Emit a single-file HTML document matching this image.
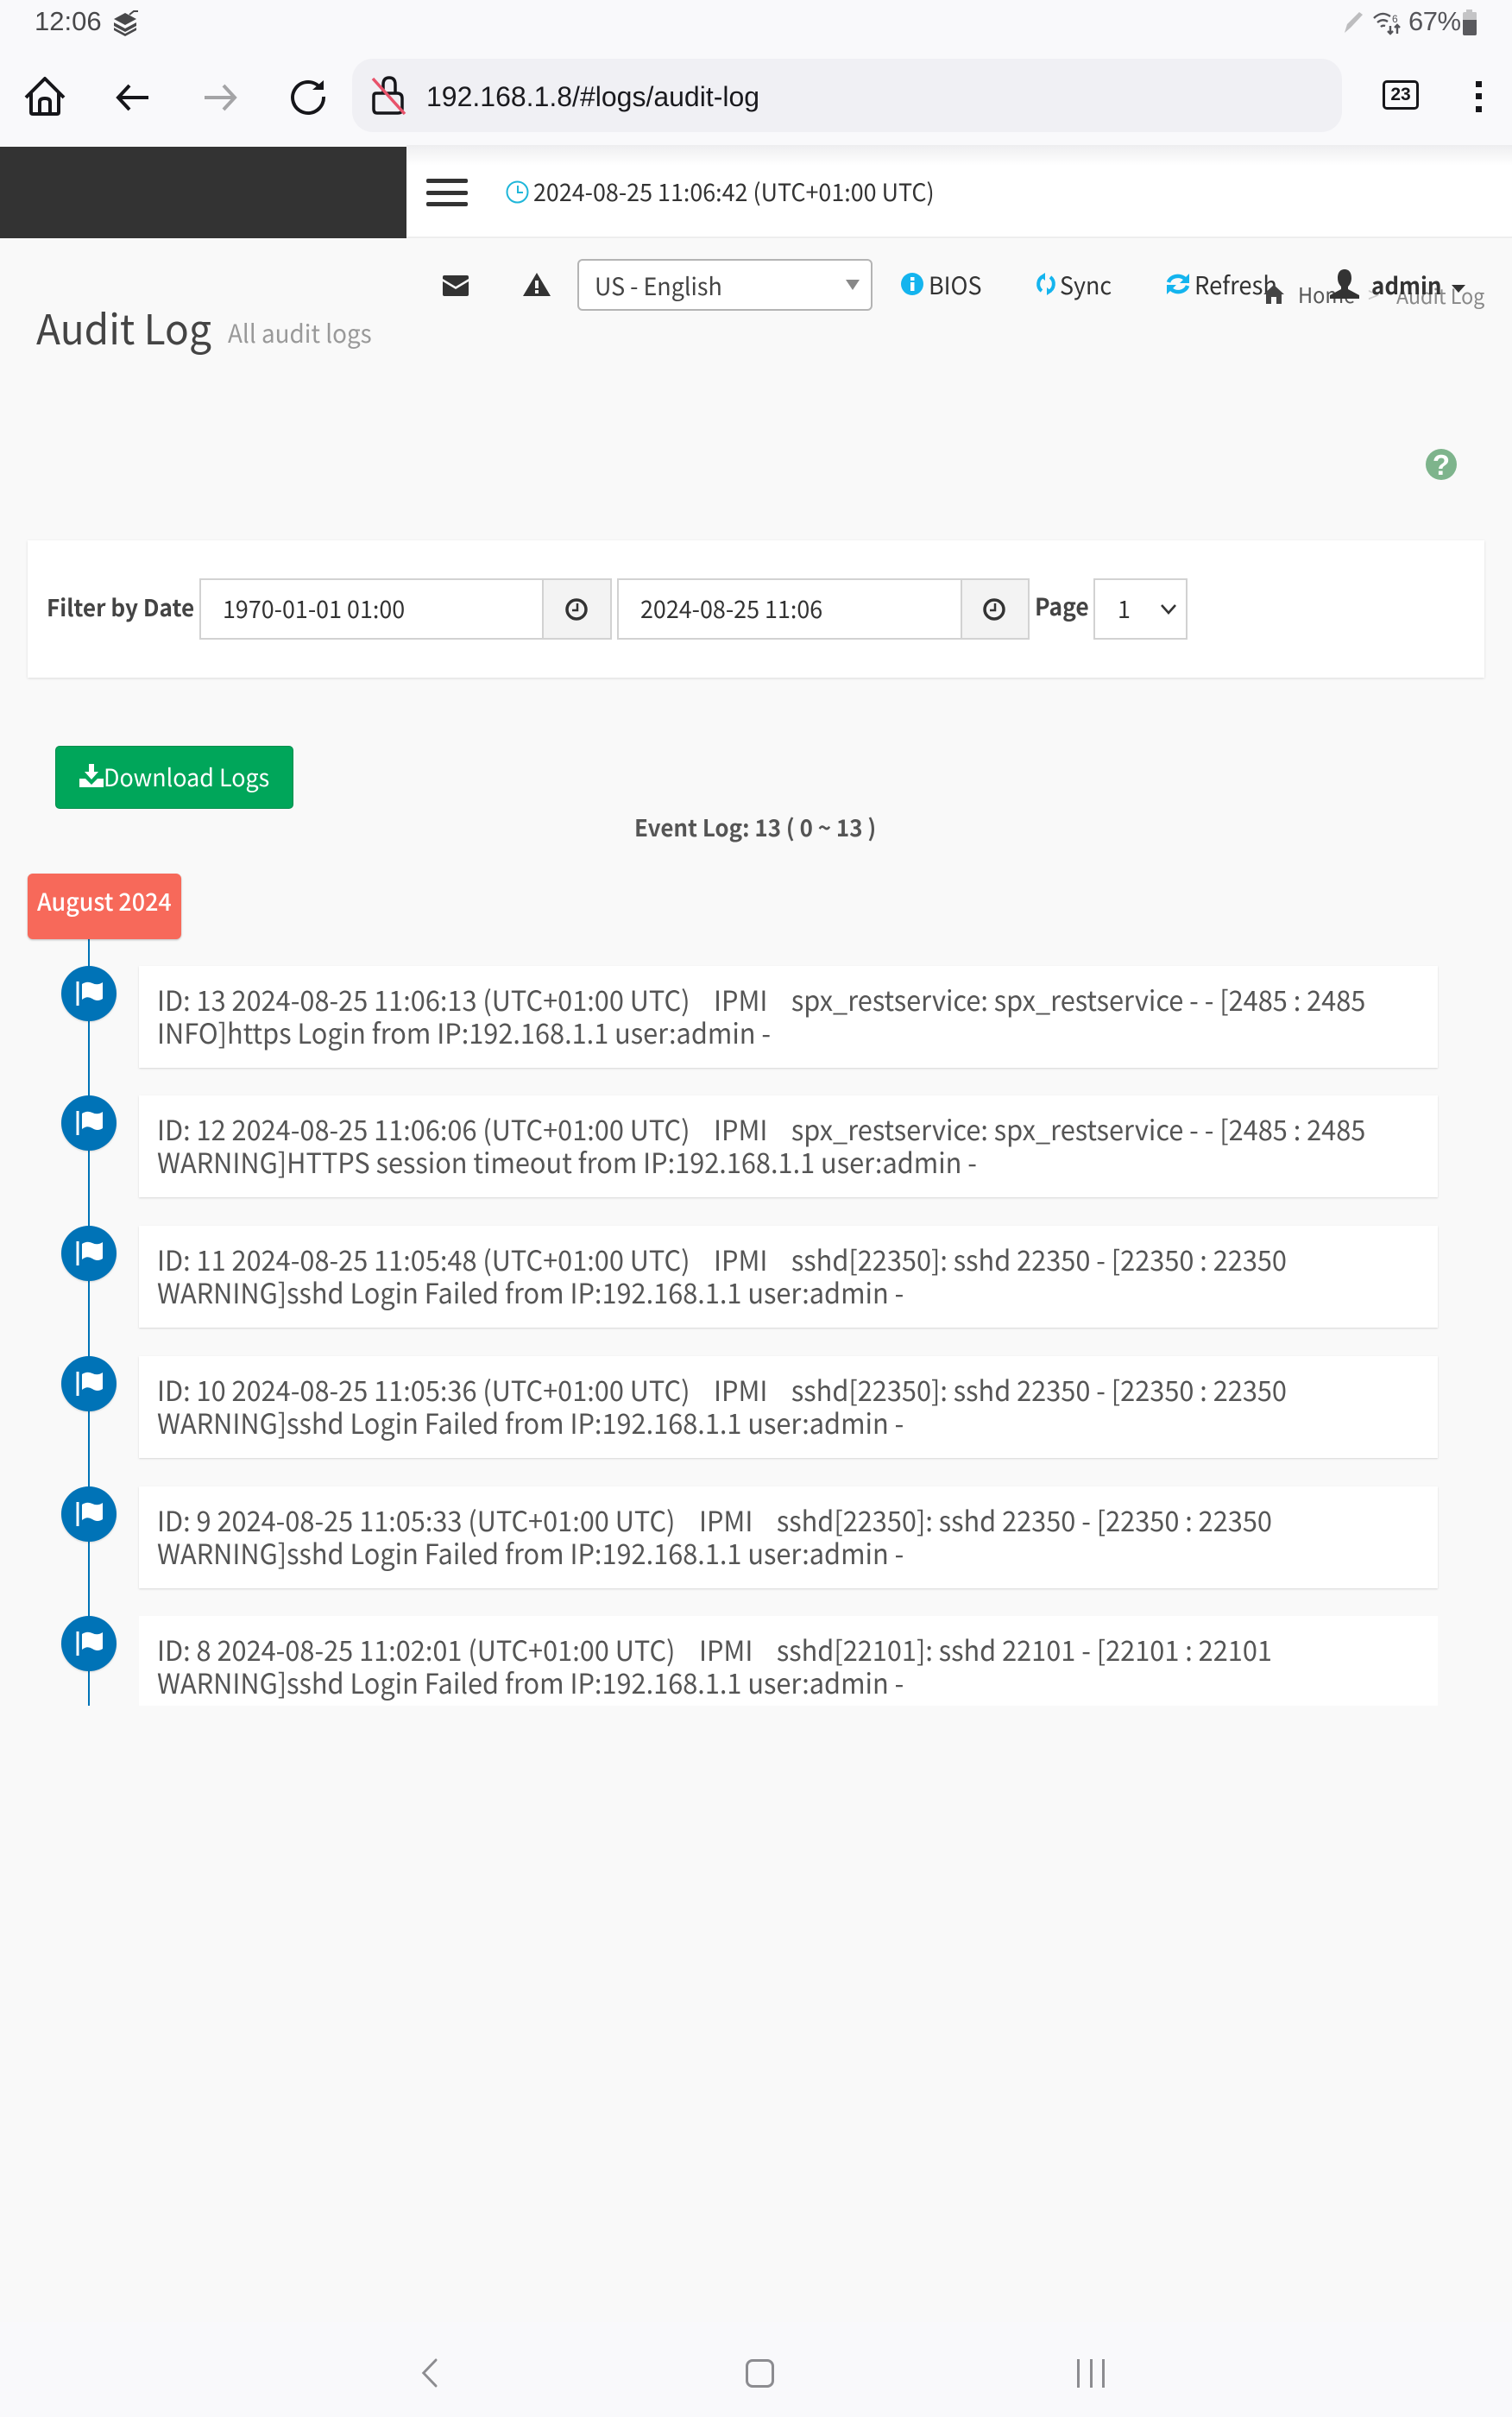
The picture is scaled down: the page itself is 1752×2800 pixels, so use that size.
<!DOCTYPE html>
<html><head><meta charset="utf-8">
<style>
html,body{margin:0;padding:0;background:#f9f9f9}
body{width:1752px;height:2800px;position:relative;overflow:hidden;font-family:"Noto Sans CJK SC","Liberation Sans",sans-serif;color:#333}
.a{position:absolute}
.t{position:absolute;white-space:pre;line-height:40px;height:40px;transform:scaleX(.96);transform-origin:0 0}
svg{position:absolute;overflow:visible}
.card{position:absolute;left:161px;width:1505px;height:118px;background:#fff;box-shadow:0 1px 2px rgba(0,0,0,.14)}
.card .t{left:21px;font-size:32px;color:#555;line-height:38px;height:38px}
.dot{position:absolute;left:71px;width:64px;height:64px;border-radius:50%;background:#0073b7;box-shadow:0 1px 2px rgba(0,0,0,.15)}
.inp{position:absolute;top:670px;height:71px;box-sizing:border-box;border:2px solid #d2d2d2;background:#fff}
.add{position:absolute;top:670px;height:71px;box-sizing:border-box;border:2px solid #d2d2d2;background:#f3f3f3}
</style></head><body>

<!-- browser chrome -->
<div class="a" style="left:0;top:0;width:1752px;height:168px;background:#f9f9fb"></div>
<div class="t" style="left:40px;top:5px;font-family:'Liberation Sans',sans-serif;font-size:31px;color:#48484a;transform:none">12:06</div>
<svg style="left:130px;top:10px" width="34" height="32" viewBox="0 0 34 32"><path d="M2 12 15 5 28 12 15 19Z" fill="#48484a"/><path d="M2 16 15 23 28 16 28 20 15 27 2 20ZM2 22 15 29 28 22 28 25 15 32 2 25Z" fill="#48484a"/><path d="M20 7 25 3 30 3" stroke="#48484a" stroke-width="2" fill="none"/></svg>
<svg style="left:1556px;top:12px" width="26" height="28" viewBox="0 0 26 28"><path d="M2 26 5 16 19 2 23 5 9 20Z" fill="#bdbdbf"/></svg>
<svg style="left:1590px;top:12px" width="36" height="28" viewBox="0 0 36 28" fill="none" stroke="#55555a" stroke-width="2.4"><path d="M2 9Q11 0 21 7M6 14Q12 9 18 13M10 19Q12 17 15 18"/><path d="M21 18V27M18 24 21 27 24 24M29 27V17M26 20 29 17 32 20"/><text x="23" y="14" font-size="12" fill="#55555a" stroke="none" font-family="Liberation Sans">6</text></svg>
<div class="t" style="left:1632px;top:5px;font-family:'Liberation Sans',sans-serif;font-size:31px;color:#55555a;letter-spacing:-.5px;transform:none">67%</div>
<svg style="left:1694px;top:10px" width="18" height="32" viewBox="0 0 18 32"><path d="M5 1H12V4H16Q17 4 17 6V29Q17 31 15 31H3Q1 31 1 29V6Q1 4 3 4H5Z" fill="#c4c4c6"/><path d="M1 13H17V29Q17 31 15 31H3Q1 31 1 29Z" fill="#5a5a5e"/></svg>

<svg style="left:28px;top:88px" width="48" height="48" viewBox="0 0 48 48" fill="none" stroke="#16161a" stroke-width="4" stroke-linejoin="round"><path d="M2 25 24 3 46 25"/><path d="M8 20V42Q8 44 10 44H38Q40 44 40 42V20"/><path d="M18 44V30Q18 26 24 26 30 26 30 30V44"/></svg>
<svg style="left:134px;top:97px" width="40" height="32" viewBox="0 0 40 32" fill="none" stroke="#16161a" stroke-width="4"><path d="M16 2 3 16 16 30M3 16H38"/></svg>
<svg style="left:235px;top:97px" width="40" height="32" viewBox="0 0 40 32" fill="none" stroke="#a4a4a6" stroke-width="4"><path d="M24 2 37 16 24 30M37 16H2"/></svg>
<svg style="left:336px;top:91px" width="42" height="42" viewBox="0 0 42 42" fill="none" stroke="#16161a" stroke-width="4"><path d="M36 12A18 18 0 1 0 39 21"/><path d="M26 13H39V2Z" fill="#16161a" stroke="none"/></svg>

<div class="a" style="left:408px;top:68px;width:1147px;height:85px;background:#f0f0f4;border-radius:24px"></div>
<svg style="left:430px;top:88px" width="42" height="46" viewBox="0 0 42 46" fill="none"><path d="M14 20V10Q14 2 21 2 28 2 28 10V20" stroke="#16161a" stroke-width="3.5" fill="none"/><path d="M6 20H30Q36 20 36 26V38Q36 43 31 43H7Q3 43 3 38V23Q3 20 6 20Z" stroke="#16161a" stroke-width="3.5" fill="#f0f0f4"/><path d="M2 3 39 44" stroke="#e8536b" stroke-width="3.5"/></svg>
<div class="t" style="left:494px;top:92px;font-family:'Liberation Sans',sans-serif;font-size:32px;color:#1a1a1e;transform:none">192.168.1.8/#logs/audit-log</div>
<div class="a" style="left:1602px;top:93px;width:42px;height:34px;box-sizing:border-box;border:3.5px solid #16161a;border-radius:5px"></div>
<div class="t" style="left:1602px;top:90px;width:42px;text-align:center;font-family:'Liberation Sans',sans-serif;font-size:21px;font-weight:700;color:#16161a;transform:none">23</div>
<div class="a" style="left:1710px;top:94px;width:7px;height:7px;background:#16161a"></div>
<div class="a" style="left:1710px;top:108px;width:7px;height:7px;background:#16161a"></div>
<div class="a" style="left:1710px;top:123px;width:7px;height:7px;background:#16161a"></div>

<!-- app header -->
<div class="a" style="left:0;top:170px;width:471px;height:106px;background:#333"></div>
<div class="a" style="left:471px;top:170px;width:1281px;height:104px;background:#fff;border-bottom:2px solid #eeeeee"></div>
<div class="a" style="left:471px;top:168px;width:1281px;height:24px;background:linear-gradient(#ececee,#ffffff);opacity:.9"></div>
<div class="a" style="left:494px;top:207px;width:48px;height:5px;background:#333;border-radius:2px"></div>
<div class="a" style="left:494px;top:221px;width:48px;height:5px;background:#333;border-radius:2px"></div>
<div class="a" style="left:494px;top:234px;width:48px;height:5px;background:#333;border-radius:2px"></div>
<svg style="left:586px;top:209px" width="27" height="27" viewBox="0 0 27 27" fill="none" stroke="#1fb6d9" stroke-width="2"><circle cx="13.5" cy="13.5" r="12"/><path d="M14 6V14H20"/></svg>
<div class="t" style="left:618px;top:202px;font-size:28px;color:#333">2024-08-25 11:06:42 (UTC+01:00 UTC)</div>

<!-- nav row -->
<svg style="left:513px;top:319px" width="30" height="24" viewBox="0 0 30 24"><path d="M2 0H28Q30 0 30 2V4L15 13 0 4V2Q0 0 2 0ZM0 7 15 16 30 7V22Q30 24 28 24H2Q0 24 0 22Z" fill="#333"/></svg>
<svg style="left:606px;top:316px" width="32" height="27" viewBox="0 0 32 27"><path fill-rule="evenodd" d="M16 0 32 27H0ZM14 9V18H18V9ZM14 20V24H18V20Z" fill="#333"/></svg>
<div class="a" style="left:669px;top:300px;width:342px;height:60px;box-sizing:border-box;background:#fff;border:2px solid #b4b4b4;border-radius:6px"></div>
<div class="t" style="left:689px;top:311px;font-size:28px;color:#444">US - English</div>
<svg style="left:980px;top:324px" width="16" height="12" viewBox="0 0 16 12"><path d="M0 0H16L8 12Z" fill="#888"/></svg>
<svg style="left:1044px;top:316px" width="26" height="26" viewBox="0 0 26 26"><circle cx="13" cy="13" r="13" fill="#14b4ee"/><rect x="11" y="11" width="4.5" height="10" fill="#fff"/><rect x="11" y="5" width="4.5" height="4" fill="#fff"/></svg>
<div class="t" style="left:1076px;top:310px;font-size:28px;color:#333">BIOS</div>
<svg style="left:1201px;top:316px" width="22" height="26" viewBox="0 0 22 26" fill="none" stroke="#14b4ee" stroke-width="4"><path d="M8 4A10 10 0 0 0 6 21"/><path d="M14 22A10 10 0 0 0 16 5"/><path d="M10 0V9L4 4ZM12 26V17L18 22Z" fill="#14b4ee" stroke="none"/></svg>
<div class="t" style="left:1228px;top:310px;font-size:28px;color:#333">Sync</div>
<svg style="left:1351px;top:316px" width="28" height="26" viewBox="0 0 28 26" fill="none" stroke="#14b4ee" stroke-width="4.5"><path d="M3 11A11 9 0 0 1 22 7"/><path d="M25 15A11 9 0 0 1 6 19"/><path d="M27 1V12H16ZM1 25V14H12Z" fill="#14b4ee" stroke="none"/></svg>
<div class="t" style="left:1384px;top:310px;font-size:28.5px;color:#333">Refresh</div>

<svg style="left:1464px;top:326px" width="24" height="26" viewBox="0 0 24 26"><path d="M12 4 24 15H21V26H15V18H9V26H3V15H0Z" fill="#444"/></svg>
<div class="t" style="left:1504px;top:322px;font-size:24.5px;color:#555">Home</div>
<div class="t" style="left:1585px;top:321px;font-size:25px;color:#ccc">&gt;</div>
<div class="t" style="left:1618px;top:322px;font-size:24.2px;color:#888">Audit Log</div>
<svg style="left:1541px;top:312px" width="34" height="34" viewBox="0 0 34 34"><path d="M17 0C23 0 25 5 25 10 25 15 23 18 21 20V23L34 30V34H0V30L13 23V20C11 18 9 15 9 10 9 5 11 0 17 0Z" fill="#333"/></svg>
<div class="t" style="left:1589px;top:310px;font-size:27px;font-weight:700;color:#333">admin</div>
<svg style="left:1682px;top:330px" width="16" height="9" viewBox="0 0 16 9"><path d="M0 0H16L8 9Z" fill="#333"/></svg>

<!-- title -->
<div class="t" style="left:42px;top:348px;font-size:48px;line-height:60px;height:60px;color:#444">Audit Log</div>
<div class="t" style="left:264px;top:365px;font-size:29px;color:#999">All audit logs</div>
<svg style="left:1652px;top:520px" width="36" height="36" viewBox="0 0 36 36"><circle cx="18" cy="18" r="18" fill="#7eb48c"/><text x="18" y="30" font-size="33" font-weight="700" text-anchor="middle" fill="#fff" font-family="Liberation Sans">?</text></svg>

<!-- filter -->
<div class="a" style="left:32px;top:626px;width:1688px;height:159px;background:#fff;box-shadow:0 1px 3px rgba(0,0,0,.12)"></div>
<div class="t" style="left:54px;top:682px;font-size:27.2px;font-weight:700;color:#444">Filter by Date</div>
<div class="inp" style="left:231px;width:399px"></div>
<div class="add" style="left:628px;width:81px"></div>
<div class="t" style="left:258px;top:685px;font-size:28px;color:#333">1970-01-01 01:00</div>
<svg style="left:655px;top:693px" width="26" height="26" viewBox="0 0 26 26" fill="none" stroke="#333" stroke-width="3.5"><circle cx="13" cy="13" r="11"/><path d="M14 6V14H8" stroke-width="2.5"/></svg>
<div class="inp" style="left:715px;width:400px"></div>
<div class="add" style="left:1113px;width:80px"></div>
<div class="t" style="left:742px;top:685px;font-size:28px;color:#333">2024-08-25 11:06</div>
<svg style="left:1139px;top:693px" width="26" height="26" viewBox="0 0 26 26" fill="none" stroke="#333" stroke-width="3.5"><circle cx="13" cy="13" r="11"/><path d="M14 6V14H8" stroke-width="2.5"/></svg>
<div class="t" style="left:1199px;top:681px;font-size:27.5px;font-weight:700;color:#444">Page</div>
<div class="inp" style="left:1267px;width:109px"></div>
<div class="t" style="left:1295px;top:685px;font-size:28px;color:#333">1</div>
<svg style="left:1344px;top:699px" width="20" height="13" viewBox="0 0 20 13" fill="none" stroke="#333" stroke-width="2.6"><path d="M2 2 10 11 18 2"/></svg>

<!-- button -->
<div class="a" style="left:64px;top:864px;width:276px;height:73px;box-sizing:border-box;background:#00a65a;border:1px solid #008d4c;border-radius:5px"></div>
<svg style="left:92px;top:885px" width="28" height="27" viewBox="0 0 28 27"><path d="M11 0H17V9H22L14 18 6 9H11ZM0 17H7L14 24 21 17H28V27H0Z" fill="#fff"/></svg>
<div class="t" style="left:120px;top:880px;font-size:28px;color:#fff">Download Logs</div>
<div class="t" style="left:735px;top:938px;font-size:27px;font-weight:700;color:#555">Event Log: 13 ( 0 ~ 13 )</div>

<!-- timeline -->
<div class="a" style="left:102px;top:1088px;width:2px;height:888px;background:#0073b7"></div>
<div class="a" style="left:32px;top:1012px;width:178px;height:76px;background:#f7695a;border-radius:6px;box-shadow:0 1px 2px rgba(0,0,0,.25)"></div>
<div class="t" style="left:43px;top:1024px;font-size:28px;font-weight:500;color:#fff">August 2024</div>

<div class="dot" style="top:1119px"><svg style="left:17px;top:18px" width="32" height="28" viewBox="0 0 32 28"><path d="M2 0V28" stroke="#fff" stroke-width="3"/><path d="M7 3Q13 -1 19 2T31 1V20Q25 24 19 20T7 21Z" fill="#fff"/></svg></div>
<div class="card" style="top:1119px"><div class="t" style="top:20px">ID: 13 2024-08-25 11:06:13 (UTC+01:00 UTC)    IPMI    spx_restservice: spx_restservice - - [2485 : 2485</div><div class="t" style="top:58px">INFO]https Login from IP:192.168.1.1 user:admin -</div></div>

<div class="dot" style="top:1269px"><svg style="left:17px;top:18px" width="32" height="28" viewBox="0 0 32 28"><path d="M2 0V28" stroke="#fff" stroke-width="3"/><path d="M7 3Q13 -1 19 2T31 1V20Q25 24 19 20T7 21Z" fill="#fff"/></svg></div>
<div class="card" style="top:1269px"><div class="t" style="top:20px">ID: 12 2024-08-25 11:06:06 (UTC+01:00 UTC)    IPMI    spx_restservice: spx_restservice - - [2485 : 2485</div><div class="t" style="top:58px">WARNING]HTTPS session timeout from IP:192.168.1.1 user:admin -</div></div>

<div class="dot" style="top:1420px"><svg style="left:17px;top:18px" width="32" height="28" viewBox="0 0 32 28"><path d="M2 0V28" stroke="#fff" stroke-width="3"/><path d="M7 3Q13 -1 19 2T31 1V20Q25 24 19 20T7 21Z" fill="#fff"/></svg></div>
<div class="card" style="top:1420px"><div class="t" style="top:20px">ID: 11 2024-08-25 11:05:48 (UTC+01:00 UTC)    IPMI    sshd[22350]: sshd 22350 - [22350 : 22350</div><div class="t" style="top:58px">WARNING]sshd Login Failed from IP:192.168.1.1 user:admin -</div></div>

<div class="dot" style="top:1571px"><svg style="left:17px;top:18px" width="32" height="28" viewBox="0 0 32 28"><path d="M2 0V28" stroke="#fff" stroke-width="3"/><path d="M7 3Q13 -1 19 2T31 1V20Q25 24 19 20T7 21Z" fill="#fff"/></svg></div>
<div class="card" style="top:1571px"><div class="t" style="top:20px">ID: 10 2024-08-25 11:05:36 (UTC+01:00 UTC)    IPMI    sshd[22350]: sshd 22350 - [22350 : 22350</div><div class="t" style="top:58px">WARNING]sshd Login Failed from IP:192.168.1.1 user:admin -</div></div>

<div class="dot" style="top:1722px"><svg style="left:17px;top:18px" width="32" height="28" viewBox="0 0 32 28"><path d="M2 0V28" stroke="#fff" stroke-width="3"/><path d="M7 3Q13 -1 19 2T31 1V20Q25 24 19 20T7 21Z" fill="#fff"/></svg></div>
<div class="card" style="top:1722px"><div class="t" style="top:20px">ID: 9 2024-08-25 11:05:33 (UTC+01:00 UTC)    IPMI    sshd[22350]: sshd 22350 - [22350 : 22350</div><div class="t" style="top:58px">WARNING]sshd Login Failed from IP:192.168.1.1 user:admin -</div></div>

<div class="dot" style="top:1872px"><svg style="left:17px;top:18px" width="32" height="28" viewBox="0 0 32 28"><path d="M2 0V28" stroke="#fff" stroke-width="3"/><path d="M7 3Q13 -1 19 2T31 1V20Q25 24 19 20T7 21Z" fill="#fff"/></svg></div>
<div class="card" style="top:1872px;height:104px;overflow:hidden;box-shadow:none"><div class="t" style="top:20px">ID: 8 2024-08-25 11:02:01 (UTC+01:00 UTC)    IPMI    sshd[22101]: sshd 22101 - [22101 : 22101</div><div class="t" style="top:58px">WARNING]sshd Login Failed from IP:192.168.1.1 user:admin -</div></div>

<!-- bottom nav -->
<div class="a" style="left:0;top:2690px;width:1752px;height:110px;background:#f9f9fb"></div>
<svg style="left:486px;top:2732px" width="22" height="34" viewBox="0 0 22 34" fill="none" stroke="#8c8c90" stroke-width="3" stroke-linecap="round"><path d="M19 2 3 17 19 32" transform="translate(2 0) scale(.9 1)"/></svg>
<div class="a" style="left:864px;top:2733px;width:33px;height:33px;box-sizing:border-box;border:3px solid #8c8c90;border-radius:8px"></div>
<div class="a" style="left:1248px;top:2733px;width:3px;height:33px;background:#8c8c90"></div>
<div class="a" style="left:1263px;top:2733px;width:3px;height:33px;background:#8c8c90"></div>
<div class="a" style="left:1277px;top:2733px;width:3px;height:33px;background:#8c8c90"></div>
</body></html>
